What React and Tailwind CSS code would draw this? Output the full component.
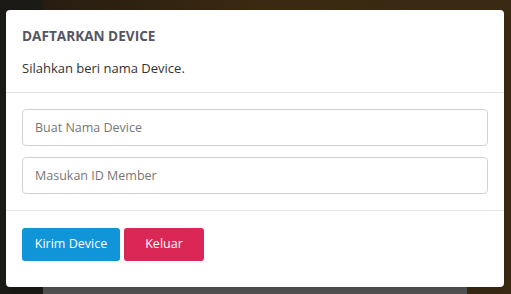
import { useState } from "react";

const DeviceModal = () => {
  const [name, setName] = useState("");
  const [memberId, setMemberId] = useState("");

  return (
    <div className="relative z-10 ml-[6px] mr-[7px] mt-[10px] rounded-[4px] bg-white shadow-lg">
      {/* header */}
      <div className="border-b border-[#e5e5e5] px-4 pt-[17px] pb-[15px]">
        <h4 className="text-[13.6px] font-bold leading-[18px] text-[#565663]">DAFTARKAN DEVICE</h4>
        <p className="mt-[14px] text-[13px] leading-[18px] text-[#333]">Silahkan beri nama Device.</p>
      </div>

      {/* body */}
      <div className="flex flex-col gap-[11px] border-b border-[#e5e5e5] px-4 pt-4 pb-4">
        <input
          type="text"
          placeholder="Buat Nama Device"
          value={name}
          onChange={(e) => setName(e.target.value)}
          className="h-[37px] w-full rounded-[4px] border border-[#d2d2d2] px-3 text-[12.5px] text-[#555] placeholder:text-[#777] outline-none"
        />
        <input
          type="text"
          placeholder="Masukan ID Member"
          value={memberId}
          onChange={(e) => setMemberId(e.target.value)}
          className="h-[37px] w-full rounded-[4px] border border-[#d2d2d2] px-3 text-[12.5px] text-[#555] placeholder:text-[#777] outline-none"
        />
      </div>

      {/* footer */}
      <div className="flex gap-1 px-4 pt-[17px] pb-[26px]">
        <button className="h-[33px] w-[98px] rounded-[3px] bg-[#0f95d8] text-[12.5px] text-white">Kirim Device</button>
        <button className="h-[33px] w-[80px] rounded-[3px] bg-[#da2755] text-[12.5px] text-white">Keluar</button>
      </div>
    </div>
  );
};

export default function App() {
  return (
    <div
      className="relative h-[294px] w-[511px] overflow-hidden bg-gradient-to-r from-[#231a10] via-[#3b2911] to-[#3a2a14]"
      style={{ fontFamily: '"Open Sans", "Noto Sans", sans-serif' }}
    >
      {/* page behind the overlay */}
      <div className="absolute bottom-0 left-[43px] right-[44px] h-3 bg-[#555]"></div>
      <div className="absolute inset-y-0 left-0 w-[43px] bg-[#1c1a17]"></div>
      <DeviceModal />
    </div>
  );
}
